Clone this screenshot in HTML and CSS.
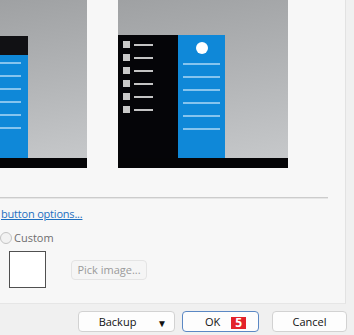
FILE: index.html
```html
<!DOCTYPE html>
<html lang="en">
<head>
    <meta charset="UTF-8">
    <meta name="viewport" content="width=device-width, initial-scale=1.0">
    <title>Start button options</title>
    <link rel="stylesheet" href="styles.css">
</head>
<body>
    <div class="dialog">
        <div class="panel">
            <!-- Start menu style previews -->
            <div class="previews">
                <div class="shot shot-left">
                    <div class="screen">
                        <div class="menu">
                            <div class="menu-head"></div>
                            <div class="menu-body">
                                <span class="bar"></span>
                                <span class="bar"></span>
                                <span class="bar"></span>
                                <span class="bar"></span>
                                <span class="bar"></span>
                                <span class="bar"></span>
                            </div>
                        </div>
                    </div>
                    <div class="taskbar"></div>
                </div>
                <div class="shot shot-right">
                    <div class="screen">
                        <div class="tiles">
                            <div class="tile-row"><span class="sq"></span><span class="ln"></span></div>
                            <div class="tile-row"><span class="sq"></span><span class="ln"></span></div>
                            <div class="tile-row"><span class="sq"></span><span class="ln"></span></div>
                            <div class="tile-row"><span class="sq"></span><span class="ln"></span></div>
                            <div class="tile-row"><span class="sq"></span><span class="ln"></span></div>
                            <div class="tile-row"><span class="sq"></span><span class="ln"></span></div>
                        </div>
                        <div class="pane">
                            <span class="avatar"></span>
                            <span class="bar"></span>
                            <span class="bar"></span>
                            <span class="bar"></span>
                            <span class="bar"></span>
                            <span class="bar"></span>
                            <span class="bar"></span>
                        </div>
                    </div>
                    <div class="taskbar"></div>
                </div>
            </div>

            <div class="separator"></div>

            <a href="#" class="link">button options...</a>

            <label class="radio">
                <span class="radio-dot"></span>
                Custom
            </label>

            <div class="custom-row">
                <div class="preview-box"></div>
                <button class="btn btn-disabled" disabled>Pick image...</button>
            </div>
        </div>

        <div class="footer">
            <button class="btn btn-backup">Backup <span class="arrow">&#9660;</span></button>
            <button class="btn btn-ok">OK <span class="badge">5</span></button>
            <button class="btn btn-cancel">Cancel</button>
        </div>
    </div>
</body>
</html>
```

FILE: styles.css
```css
body {
    margin: 0;
    width: 354px;
    height: 335px;
    overflow: hidden;
    background-color: #f0f0f0;
    font-family: "Open Sans", "Noto Sans", Arial, sans-serif;
    font-size: 11px;
}
.dialog {
    display: flex;
    flex-direction: column;
    height: 335px;
}
.panel {
    width: 346px;
    height: 304px;
    background-color: #f7f7f7;
    border-right: 1px solid #e2e2e2;
    border-bottom: 1px solid #e6e6e6;
    box-sizing: border-box;
}
.previews {
    display: flex;
    height: 168px;
}
.shot {
    display: flex;
    flex-direction: column;
}
.shot-left {
    width: 87px;
    margin-right: 31px;
}
.shot-right {
    width: 170px;
}
.screen {
    flex: 1;
    display: flex;
    background: linear-gradient(170deg, #9fa1a3 0%, #b4b6b8 55%, #c6c8ca 100%);
}
.taskbar {
    height: 10px;
    background: #050507;
}
.bar {
    display: block;
    height: 2px;
    background: #86c4ee;
}

/* left preview */
.shot-left .screen {
    padding-top: 36px;
}
.menu {
    width: 28px;
    display: flex;
    flex-direction: column;
}
.menu-head {
    height: 19px;
    background: #111114;
}
.menu-body {
    flex: 1;
    background: #0f88d8;
    padding: 7px 7px 0 0;
    display: flex;
    flex-direction: column;
    gap: 11px;
}

/* right preview */
.shot-right .screen {
    padding-top: 35px;
}
.tiles {
    width: 60px;
    background: #050508;
    padding: 6px 0 0 5px;
    box-sizing: border-box;
    display: flex;
    flex-direction: column;
    gap: 6px;
}
.tile-row {
    display: flex;
    align-items: center;
    gap: 4px;
    height: 7px;
}
.sq {
    width: 7px;
    height: 7px;
    background: #c9c9c9;
}
.ln {
    width: 19px;
    height: 2px;
    background: #c4c4c4;
}
.pane {
    width: 47px;
    background: #0f88d8;
    padding: 7px 5px 0;
    box-sizing: border-box;
    display: flex;
    flex-direction: column;
    gap: 11px;
}
.avatar {
    width: 12px;
    height: 12px;
    border-radius: 50%;
    background: #fff;
    align-self: center;
    margin-bottom: -2px;
}

.separator {
    margin-top: 29px;
    width: 328px;
    height: 1px;
    background: #cccccc;
    border-bottom: 1px solid #e6e6e6;
}
.link {
    display: inline-block;
    margin: 7px 0 0 1px;
    color: #1e6fc0;
    text-decoration: underline;
    line-height: 15px;
    letter-spacing: -0.2px;
}
.radio {
    display: flex;
    align-items: center;
    gap: 2px;
    margin-top: 10px;
    color: #6e6e6e;
    line-height: 14px;
}
.radio-dot {
    width: 10px;
    height: 10px;
    border: 1px solid #c4c4c4;
    border-radius: 50%;
    background: #f2f2f2;
}
.custom-row {
    display: flex;
    align-items: center;
    gap: 25px;
    margin: 6px 0 0 9px;
}
.preview-box {
    width: 35px;
    height: 35px;
    background: #fff;
    border: 1px solid #505050;
}
.btn {
    font-family: inherit;
    font-size: 11px;
    height: 21px;
    padding: 0;
    border: 1px solid #d2d2d2;
    border-radius: 4px;
    background: #fdfdfd;
    color: #111;
    box-sizing: border-box;
}
.btn-disabled {
    width: 76px;
    height: 20px;
    background: #f5f5f5;
    border-color: #e4e4e4;
    color: #9a9a9a;
}
.footer {
    display: flex;
    align-items: flex-start;
    padding: 7px 0 0 78px;
    gap: 7px;
}
.btn-backup {
    width: 97px;
    padding-right: 18px;
    position: relative;
}
.arrow {
    position: absolute;
    right: 7px;
    top: 4px;
    font-size: 10px;
}
.btn-ok {
    width: 77px;
    text-align: left;
    padding-left: 22px;
    border-color: #5b88c4;
}
.badge {
    display: inline-block;
    background: #e3222a;
    color: #fff;
    font-weight: bold;
    font-size: 12px;
    text-align: center;
    width: 15px;
    height: 12px;
    line-height: 12px;
    margin-left: 8px;
    vertical-align: -1px;
}
.btn-cancel {
    width: 75px;
    margin-left: 6px;
}
```
